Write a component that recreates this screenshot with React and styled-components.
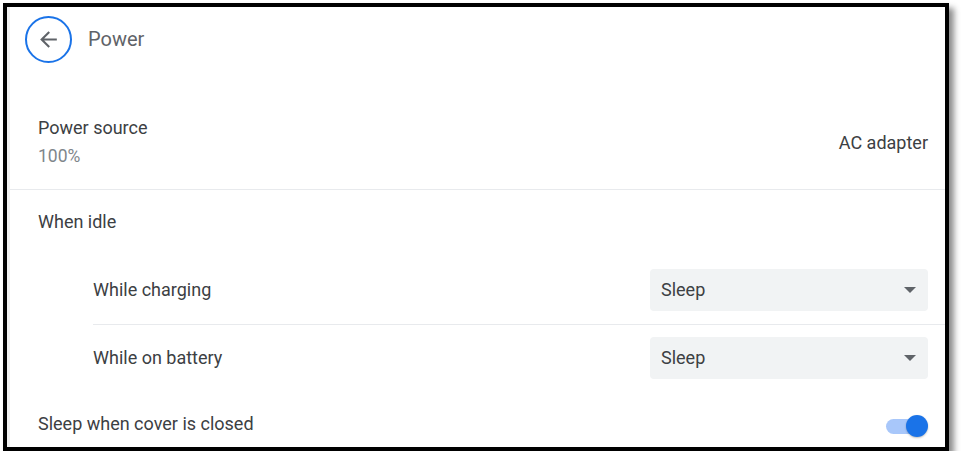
import React from "react";
import styled, { createGlobalStyle } from "styled-components";

const GlobalStyle = createGlobalStyle`
    body {
        margin: 0;
        background: #ffffff;
        font-family: Roboto, "Liberation Sans", sans-serif;
    }
`;

const Frame = styled.div`
    margin: 3px 0 0 3px;
    width: 938px;
    height: 440px;
    border: 4px solid #000;
    box-shadow: 5px 5px 6px rgba(0, 0, 0, 0.45);
    background: #fff;
    overflow: hidden;
    position: relative;
    &::before {
        content: "";
        position: absolute;
        left: 0;
        top: 0;
        bottom: 0;
        width: 3px;
        background: #f0f0f0;
    }
`;

const Header = styled.div`
    display: flex;
    align-items: center;
    gap: 16px;
    height: 63px;
    padding-left: 18px;
`;

const BackButton = styled.button`
    width: 47px;
    height: 47px;
    margin-top: 1px;
    border-radius: 50%;
    border: 2px solid #1a73e8;
    background: #fff;
    display: flex;
    align-items: center;
    justify-content: center;
    padding: 0;
`;

const Title = styled.h1`
    margin: 0;
    font-size: 20px;
    font-weight: 400;
    color: #5f6368;
`;

const Row = styled.div`
    display: flex;
    align-items: center;
    justify-content: space-between;
    padding: ${p => p.$pad || "0"};
    padding-left: ${p => (p.$indent ? "86px" : "31px")};
    padding-right: 17px;
    margin-left: ${p => (p.$lineInset ? "86px" : "0")};
    border-bottom: ${p => (p.$divider ? "1px solid #e8eaed" : "none")};
    ${p => p.$lineInset && "padding-left: 0;"}
`;

const Label = styled.div`
    font-size: 18px;
    line-height: 24px;
    color: #3c4043;
`;

const Sub = styled.div`
    font-size: 17.5px;
    line-height: 24px;
    color: #80868b;
    margin-top: 4px;
`;

const Value = styled.div`
    font-size: 18px;
    color: #3c4043;
    margin-top: 1px;
`;

const Select = styled.div`
    width: 278px;
    height: 42px;
    box-sizing: border-box;
    border-radius: 4px;
    background: #f1f3f4;
    display: flex;
    align-items: center;
    justify-content: space-between;
    padding: 0 12px 2px 11px;
    font-size: 18px;
    color: #3c4043;
`;

const Caret = styled.span`
    width: 0;
    height: 0;
    margin-top: 2px;
    border-left: 6px solid transparent;
    border-right: 6px solid transparent;
    border-top: 6px solid #5f6368;
`;

const Toggle = styled.div`
    position: relative;
    width: 42px;
    height: 22px;
    margin-top: 4px;
`;

const Track = styled.div`
    position: absolute;
    left: 0;
    right: 6px;
    top: 4px;
    height: 15px;
    border-radius: 8px;
    background: #a8c7fa;
`;

const Thumb = styled.div`
    position: absolute;
    right: 0;
    top: 0;
    width: 22px;
    height: 22px;
    border-radius: 50%;
    background: #1a73e8;
    box-shadow: 0 1px 2px rgba(0, 0, 0, 0.25);
`;

const App = () => (
    <>
        <GlobalStyle />
        <Frame>
            <Header>
                <BackButton type="button" aria-label="Back">
                    <svg width="25" height="25" viewBox="0 0 24 24">
                        <path
                            d="M20 11H7.83l5.59-5.59L12 4l-8 8 8 8 1.41-1.41L7.83 13H20v-2z"
                            fill="#5f6368"
                        />
                    </svg>
                </BackButton>
                <Title>Power</Title>
            </Header>

            <Row $pad="46px 0 21px" $divider>
                <div>
                    <Label>Power source</Label>
                    <Sub>100%</Sub>
                </div>
                <Value>AC adapter</Value>
            </Row>

            <Row $pad="20px 0 21px">
                <Label>When idle</Label>
            </Row>

            <Row $pad="14px 0 13px" $divider $lineInset>
                <Label>While charging</Label>
                <Select>
                    Sleep
                    <Caret />
                </Select>
            </Row>

            <Row $pad="12px 0 12px" $indent>
                <Label>While on battery</Label>
                <Select>
                    Sleep
                    <Caret />
                </Select>
            </Row>

            <Row $pad="20px 0 0">
                <Label>Sleep when cover is closed</Label>
                <Toggle>
                    <Track />
                    <Thumb />
                </Toggle>
            </Row>
        </Frame>
    </>
);

export default App;
